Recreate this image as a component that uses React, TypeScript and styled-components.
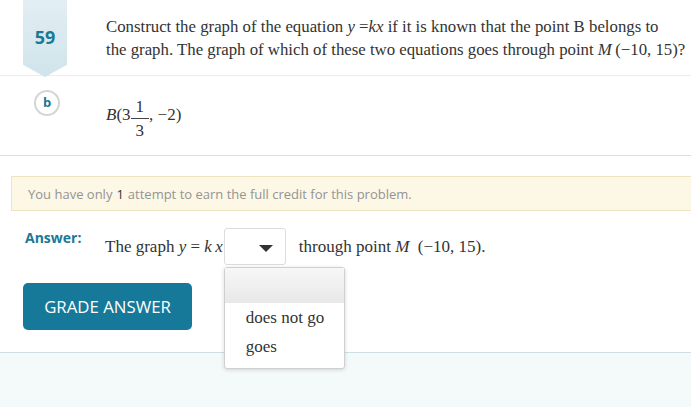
import React from 'react';
import styled, { createGlobalStyle } from 'styled-components';

const GlobalStyle = createGlobalStyle`
  html, body {
    margin: 0;
    padding: 0;
    background: #ffffff;
    overflow: hidden;
  }
`;

const App = () => {
  return (
    <Page>
      <GlobalStyle />
      <Header>
        <Badge>59</Badge>
        <Question>
          Construct the graph of the equation <i>y</i> =<i>kx</i> if it is known that the point B
          belongs to
          <br />
          the graph. The graph of which of these two equations goes through point <i>M</i>
          &#8201;(−10, 15)?
        </Question>
      </Header>
      <OptionRow>
        <OptionLetter>b</OptionLetter>
        <MathLine>
          <i>B</i>(3
          <Fraction>
            <span>1</span>
            <span>3</span>
          </Fraction>
          , −2)
        </MathLine>
      </OptionRow>
      <Notice>
        You have only <b>1</b> attempt to earn the full credit for this problem.
      </Notice>
      <AnswerRow>
        <AnswerLabel>Answer:</AnswerLabel>
        <AnswerText>
          The graph <i>y</i>&nbsp;=&nbsp;<i>k&#8201;x</i>
          <SelectWrap>
            <SelectBox>
              <Caret />
            </SelectBox>
            <Menu>
              <MenuItem $active />
              <MenuItem>does not go</MenuItem>
              <MenuItem>goes</MenuItem>
            </Menu>
          </SelectWrap>
          through point <i>M</i>&nbsp;&nbsp;(−10, 15).
        </AnswerText>
      </AnswerRow>
      <ButtonRow>
        <GradeButton>GRADE ANSWER</GradeButton>
      </ButtonRow>
      <Footer />
    </Page>
  );
};

export default App;

const Page = styled.div`
  width: 100%;
  min-height: 407px;
  display: flex;
  flex-direction: column;
  background: #ffffff;
  font-family: 'Liberation Serif', 'Times New Roman', serif;
  color: #333333;
`;

const Header = styled.div`
  display: flex;
  align-items: flex-start;
  height: 75px;
  border-bottom: 1px solid #e9eef0;
`;

const Badge = styled.div`
  flex: none;
  width: 44px;
  height: 77px;
  margin-left: 23px;
  margin-right: 39px;
  position: relative;
  z-index: 1;
  padding-top: 25px;
  box-sizing: border-box;
  text-align: center;
  font-family: 'Open Sans', sans-serif;
  font-size: 18px;
  font-weight: 700;
  color: #1b7896;
  background: linear-gradient(#e2eef3, #d0e4eb);
  clip-path: polygon(0 0, 100% 0, 100% 84%, 50% 100%, 0 84%);
`;

const Question = styled.div`
  flex: 1;
  padding-top: 15px;
  font-size: 16.8px;
  line-height: 23px;
  white-space: nowrap;
  color: #333;

  i {
    font-style: italic;
  }
`;

const OptionRow = styled.div`
  display: flex;
  align-items: flex-start;
  height: 79px;
  border-bottom: 1px solid #d4e2e8;
`;

const OptionLetter = styled.div`
  flex: none;
  width: 22px;
  height: 20px;
  margin: 14px 0 0 34px;
  padding-bottom: 2px;
  border: 2px solid #d2d6d6;
  border-radius: 50%;
  display: flex;
  align-items: center;
  justify-content: center;
  font-family: 'Open Sans', sans-serif;
  font-size: 13px;
  font-weight: 700;
  color: #1b7896;
  line-height: 1;
`;

const MathLine = styled.div`
  display: flex;
  align-items: center;
  margin-left: 46px;
  margin-top: 14px;
  font-size: 17px;
  color: #333;

  i {
    font-style: italic;
  }
`;

const Fraction = styled.span`
  display: inline-flex;
  flex-direction: column;
  align-items: center;
  padding-top: 8px;
  font-size: 17px;
  line-height: 18px;

  span:first-child {
    border-bottom: 1px solid #444;
    padding: 0 5px 2px;
  }

  span:last-child {
    padding-top: 3px;
  }
`;

const Notice = styled.div`
  margin: 20px -10px 0 11px;
  height: 33px;
  padding-left: 16px;
  display: flex;
  align-items: center;
  background: #fdf7e5;
  border: 1px solid #efe4c2;
  font-family: 'Open Sans', sans-serif;
  font-size: 13px;
  color: #949494;

  b {
    font-weight: 400;
    color: #333;
    margin: 0 4px;
  }
`;

const AnswerRow = styled.div`
  display: flex;
  align-items: flex-start;
  margin-top: 17px;
  padding-left: 25px;
`;

const AnswerLabel = styled.div`
  width: 80px;
  font-family: 'Open Sans', sans-serif;
  font-size: 14px;
  font-weight: 700;
  color: #1b7896;
`;

const AnswerText = styled.div`
  display: flex;
  align-items: center;
  font-size: 17px;
  color: #333;
  white-space: pre;

  i {
    font-style: italic;
  }
`;

const SelectWrap = styled.div`
  position: relative;
  margin: 0 13px 0 1px;
`;

const SelectBox = styled.div`
  width: 60px;
  height: 35px;
  border: 1px solid #dcdcdc;
  border-radius: 3px;
  background: #fff;
  position: relative;
`;

const Caret = styled.span`
  position: absolute;
  left: 34px;
  top: 16px;
  width: 0;
  height: 0;
  border-left: 7px solid transparent;
  border-right: 7px solid transparent;
  border-top: 7px solid #333;
`;

const Menu = styled.div`
  position: absolute;
  left: 0;
  top: 39px;
  width: 119px;
  padding-bottom: 7px;
  background: #fff;
  border: 1px solid #cfcfcf;
  border-radius: 3px;
  box-shadow: 0 1px 4px rgba(0, 0, 0, 0.15);
  z-index: 5;
`;

const MenuItem = styled.div<{ $active?: boolean }>`
  height: ${(p) => (p.$active ? '35px' : '29px')};
  line-height: 29px;
  padding-left: 21px;
  font-size: 17px;
  color: #333;
  background: ${(p) => (p.$active ? 'linear-gradient(#f7f7f7, #e8e8e8)' : '#fff')};
`;

const ButtonRow = styled.div`
  padding: 18px 0 22px 23px;
`;

const GradeButton = styled.button`
  width: 169px;
  height: 47px;
  border: none;
  border-radius: 5px;
  background: #16799a;
  color: #fff;
  font-family: 'Open Sans', sans-serif;
  font-size: 16.8px;
  cursor: pointer;
`;

const Footer = styled.div`
  flex: 1;
  border-top: 1px solid #cde0e6;
  background: #f4f9fa;
`;
